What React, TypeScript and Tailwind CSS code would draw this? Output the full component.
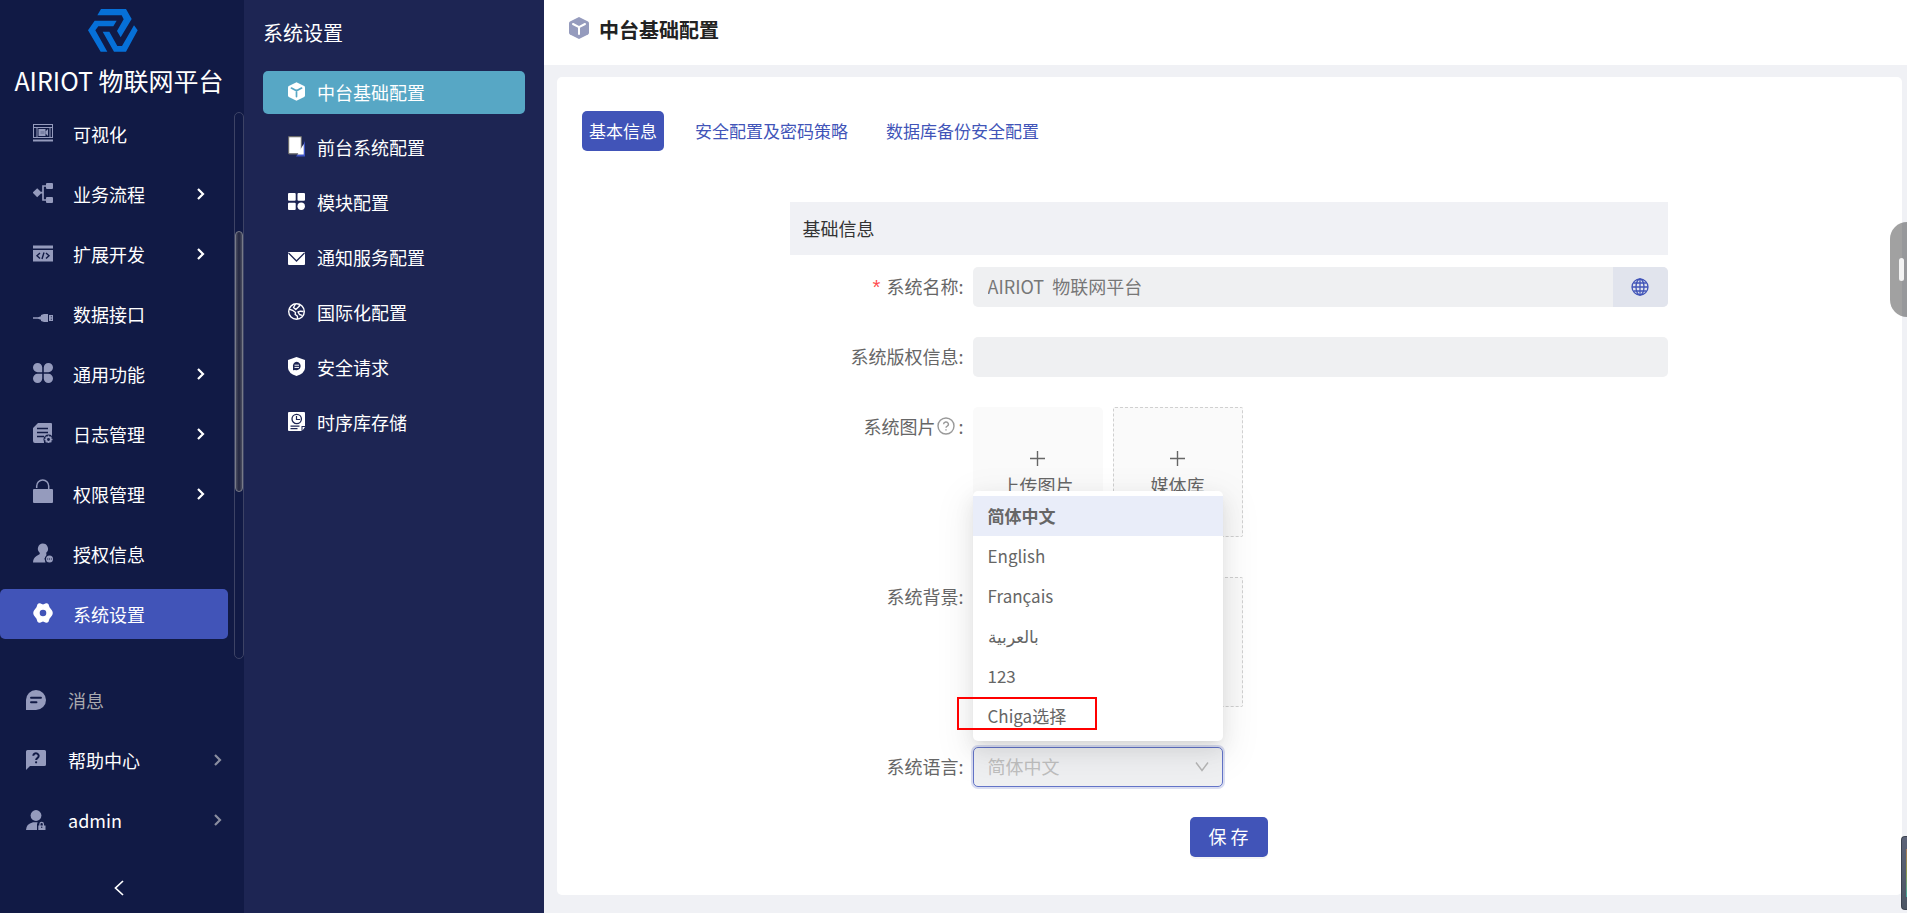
import type { ReactNode } from 'react';
import { AiFillSetting } from 'react-icons/ai';

type IconProps = { children: ReactNode; className?: string; box?: string };

function Glyph({ children, className = 'size-5', box = '0 0 20 20' }: IconProps) {
  return (
    <svg viewBox={box} className={`shrink-0 ${className}`} fill="currentColor" aria-hidden="true">
      {children}
    </svg>
  );
}

const navBg = '#111a45';
const subBg = '#1d2553';

function Chevron({ className }: { className: string }) {
  return (
    <svg viewBox="0 0 8 12" className={`h-3 w-2 shrink-0 ${className}`} fill="none" stroke="currentColor" strokeWidth="2.200" aria-hidden="true">
      <path d="M1 1l5 5-5 5" />
    </svg>
  );
}

function Cube({ className, line }: { className: string; line: string }) {
  return (
    <Glyph className={className} box="0 0 20 22">
      <path d="M10 0l9 4.600q1 .6 1 1.600v9.600q0 1-1 1.600L10 22l-9-4.600q-1-.6-1-1.600V6.200q0-1 1-1.600z" />
      <path d="M4 7l6 3.200L16 7M10 10v7" fill="none" stroke={line} strokeWidth="2" strokeLinecap="round" />
    </Glyph>
  );
}

const icons = {
  visual: (
    <Glyph>
      <path d="M0 1h20v14H0zM1 2v12h18V2z" fillRule="evenodd" />
      <path d="M1 4h18v1H1zM3.500 5h1v9h-1zM16.500 5h1v9h-1zM5.500 6h7v7h-7z" />
      <path d="M12.500 8.500l2.500-2.500v7l-2.500-2.500z" />
      <path d="M7.500 8h4v3h-4z" fill={navBg} opacity=".2" />
      <path d="M0 16.500h20v2H0z" />
    </Glyph>
  ),
  flow: (
    <Glyph>
      <path d="M4.200 5.200l4.600 4.500-4.600 4.500L-.4 9.700z" />
      <rect x="13" y="0" width="7" height="6" rx="1" />
      <rect x="13" y="14" width="7" height="6" rx="1" />
      <path d="M14 3h-4v14h4M8 9.700h2" fill="none" stroke="currentColor" strokeWidth="1.700" />
    </Glyph>
  ),
  code: (
    <Glyph>
      <path d="M0 2.500h20v3H0zM0 7h20v11.500H0z" />
      <path d="M7 10l-3 2.700 3 2.700M13 10l3 2.700-3 2.700M11 9.500l-2 6.500" fill="none" stroke={navBg} strokeWidth="1.400" />
    </Glyph>
  ),
  plug: (
    <Glyph>
      <path d="M0 14.200h5l3-1V12l3-1h4v8h-4l-3-1v-1.200l-3-1H0zM16 12h4v6h-4z" />
      <path d="M17.800 13.300h1v1h-1zM17.800 15.700h1v1h-1z" fill={navBg} />
    </Glyph>
  ),
  clover: (
    <Glyph>
      <path d="M4.600 0a4.600 4.600 0 0 1 4.600 4.600v4.600H4.600a4.600 4.600 0 0 1 0-9.200zM15.400 0a4.600 4.600 0 0 1 0 9.200h-4.600V4.600A4.600 4.600 0 0 1 15.400 0zM4.600 10.800h4.600v4.600a4.600 4.600 0 1 1-4.600-4.600zM10.800 10.800h4.600a4.600 4.600 0 1 1-4.600 4.600z" />
    </Glyph>
  ),
  log: (
    <Glyph>
      <path d="M5 0h13q1 0 1 1v12h-4l-4 4v3H2q-2 0-2-2V5z" />
      <path d="M4 5.500h11M4 9.500h11M4 13.500h7" stroke={navBg} strokeWidth="1.300" />
      <circle cx="15.500" cy="16.500" r="5" fill={navBg} />
      <circle cx="15.500" cy="16.500" r="2.300" fill="none" stroke="currentColor" strokeWidth="1.700" />
      <path d="M15.500 12.500v1.500M15.500 19v1.500M11.500 16.500H13M18 16.500h1.500M12.700 13.700l1 1M17.300 18.300l1 1M12.700 19.300l1-1M17.300 14.700l1-1" stroke="currentColor" strokeWidth="1.300" />
    </Glyph>
  ),
  lock: (
    <Glyph className="mb-1 h-6 w-5" box="0 0 20 24">
      <rect x="0" y="10" width="20" height="14" rx="1" />
      <path d="M3.700 9V7a6 6 0 0 1 12 0v3" fill="none" stroke="currentColor" strokeWidth="1.500" />
    </Glyph>
  ),
  userInfo: (
    <Glyph>
      <path d="M9.700.5a5.300 5.300 0 0 1 3.500 9.300l.3 2.700-2 3 1 4H0q0-4.500 3.500-6.500l3-1.800q.7-.5 0-1.600A5.300 5.300 0 0 1 9.700.5z" />
      <circle cx="16.500" cy="16" r="4.700" fill={navBg} />
      <circle cx="16.500" cy="16" r="3.500" />
      <path d="M14.200 16h1M16 16h1M17.900 16h1" stroke={navBg} strokeWidth="1" />
    </Glyph>
  ),
  gear: (
    <Glyph>
      <path
        d="M10 1.500L13 .2q1.500-.3 2.500 1l1 3 2.500 3.300q1.500 2.500 0 5l-2.500 3.300-1 3q-1 1.300-2.500 1L10 18.500l-3 1.300q-1.500.3-2.500-1l-1-3L1 12.500q-1.500-2.500 0-5l2.500-3.300 1-3q1-1.300 2.500-1zM10 6.700a3.300 3.300 0 1 0 0 6.600 3.300 3.300 0 0 0 0-6.600z"
        fillRule="evenodd"
      />
    </Glyph>
  ),
  message: (
    <Glyph>
      <path d="M10 0a10 10 0 0 1 0 20H0V10A10 10 0 0 1 10 0z" />
      <path d="M5 7.800h10M5 12.300h5.500" stroke={navBg} strokeWidth="1.900" strokeLinecap="round" />
    </Glyph>
  ),
  help: (
    <Glyph>
      <path d="M1.500 0h17Q20 0 20 1.500v13q0 1.500-1.500 1.500H4l-4 4V1.500Q0 0 1.500 0z" />
      <path d="M7.300 5.800a2.700 2.500 0 1 1 4.300 2Q10.100 8.800 10.100 10" fill="none" stroke={navBg} strokeWidth="2" />
      <circle cx="10.100" cy="12.300" r="1.100" fill={navBg} />
    </Glyph>
  ),
  admin: (
    <Glyph>
      <circle cx="10" cy="5.500" r="5.400" />
      <path d="M0 20q0-6 7-7.800h4.500V20z" />
      <path d="M11 20v-6l2-2h5v8z" fill={navBg} />
      <path d="M12.300 20v-4.500h1V14a2.300 2.300 0 0 1 4.700 0v1.500h1.500V20zM14.500 15.500h2.300v-1.300a1.150 1.150 0 0 0-2.300 0z" fillRule="evenodd" />
      <circle cx="15.700" cy="17.300" r=".7" fill={navBg} />
    </Glyph>
  ),
};

const subIcon = 'h-[19px] w-[17px]';

const subIcons = {
  cube: <Cube className={subIcon} line="#57a7c5" />,
  front: (
    <Glyph className="h-[21px] w-[17px]" box="0 0 17 21">
      <path d="M8 20.500h9V5l-2 5z" fill="#3f55c6" />
      <rect x=".6" y=".6" width="12.800" height="17.200" rx=".8" fill="#fff" stroke="#6b6b6b" strokeWidth="1.200" />
      <path d="M15.700 8v10.500H9.500z" fill="#fff" />
    </Glyph>
  ),
  modules: (
    <Glyph className="size-[17px]" box="0 0 17 17">
      <rect width="7.700" height="7.700" rx="1" />
      <rect x="9.500" width="7.500" height="7.700" rx="1" />
      <rect y="9.700" width="7.700" height="7.300" rx="1" />
      <circle cx="13.200" cy="13.300" r="3.700" />
    </Glyph>
  ),
  mail: (
    <Glyph className="size-[17px]" box="0 0 17 17">
      <rect y="4" width="17" height="13" rx="1" />
      <path d="M.5 5l8 8 8-8" fill="none" stroke={subBg} strokeWidth="1.300" />
    </Glyph>
  ),
  globe: (
    <Glyph className="size-[17px]" box="0 0 17 17">
      <circle cx="8.500" cy="8.500" r="7.800" fill="none" stroke="currentColor" strokeWidth="1.400" />
      <path d="M7.500 1L5.500 4.500l2.300 2L11.500 3l-.5-1.500M1 6l3.500 1.300L7.500 9.500l-.3 2 2.100 1.500.3 3M15.500 8.500l-3-.3-2.500.8 1.500 2.500 2.500.8" fill="none" stroke="currentColor" strokeWidth="1.400" strokeLinejoin="round" />
    </Glyph>
  ),
  shield: (
    <Glyph className={subIcon} box="0 0 17 19">
      <path d="M8.500 0L17 3v8q0 5-8.500 8Q0 16 0 11V3z" />
      <path d="M8.700 4.800a4.200 4.200 0 1 1-1.500 8.200L5 13.200V10a4.200 4.200 0 0 1 3.700-5.200z" fill={subBg} />
      <path d="M6.500 8.200h4.500M6.500 10.400h4.500" stroke="currentColor" strokeWidth="1" />
    </Glyph>
  ),
  clock: (
    <Glyph className={subIcon} box="0 0 17 19">
      <path d="M1 0h15q1 0 1 1v13h-3.500v5H1q-1 0-1-1V1q0-1 1-1zM14.500 15H17l-2.500 3.500z" />
      <circle cx="8.700" cy="7" r="4.700" fill="none" stroke={subBg} strokeWidth="1.300" />
      <path d="M8.500 4v3.500H12M2.500 14.200h9M2.500 16.700h7" fill="none" stroke={subBg} strokeWidth="1.200" />
    </Glyph>
  ),
};

const navItems = [
  { label: '可视化', icon: icons.visual, more: false, active: false },
  { label: '业务流程', icon: icons.flow, more: true, active: false },
  { label: '扩展开发', icon: icons.code, more: true, active: false },
  { label: '数据接口', icon: icons.plug, more: false, active: false },
  { label: '通用功能', icon: icons.clover, more: true, active: false },
  { label: '日志管理', icon: icons.log, more: true, active: false },
  { label: '权限管理', icon: icons.lock, more: true, active: false },
  { label: '授权信息', icon: icons.userInfo, more: false, active: false },
  { label: '系统设置', icon: icons.gear, more: false, active: true },
];

const footItems = [
  { label: '消息', icon: icons.message, more: false, muted: true },
  { label: '帮助中心', icon: icons.help, more: true, muted: false },
  { label: 'admin', icon: icons.admin, more: true, muted: false },
];

const subItems = [
  { label: '中台基础配置', icon: subIcons.cube, active: true },
  { label: '前台系统配置', icon: subIcons.front, active: false },
  { label: '模块配置', icon: subIcons.modules, active: false },
  { label: '通知服务配置', icon: subIcons.mail, active: false },
  { label: '国际化配置', icon: subIcons.globe, active: false },
  { label: '安全请求', icon: subIcons.shield, active: false },
  { label: '时序库存储', icon: subIcons.clock, active: false },
];

const tabs = ['基本信息', '安全配置及密码策略', '数据库备份安全配置'];
const languages = ['简体中文', 'English', 'Français', 'بالعربية', '123', 'Chiga选择'];

function Sidebar() {
  return (
    <aside className="flex w-[244px] shrink-0 flex-col bg-[#111a45] text-white">
      <div className="flex h-[109px] flex-col items-center pt-[9px] pr-[6px]">
        <svg viewBox="0 0 150 129" className="mr-3 h-[43px] w-[50px]" fill="#0670d8" aria-hidden="true">
          <path d="M39 0H114L131 30 98 85 87 66 107 31 101 19H28z" />
          <path d="M20 35H86L76 52H31L22 64 58 128H38L0 64z" />
          <path d="M44 68H64L88 111H102L138 49 149 64 114 128H78z" />
        </svg>
        <h1 className="mt-[10px] text-[25px] leading-9 whitespace-nowrap">AIRIOT 物联网平台</h1>
      </div>
      <div className="flex justify-between">
        <nav className="w-[228px]">
          <ul className="flex flex-col gap-[10px]">
            {navItems.map((item) => (
              <li key={item.label}>
                <a
                  href="#"
                  className={`flex h-[50px] items-center rounded-[5px] pr-[23px] pl-[33px] ${item.active ? 'bg-[#4154b8]' : ''}`}
                >
                  <span className={`flex pb-[2px] ${item.active ? 'text-white' : 'text-[#959bbd]'}`}>{item.icon}</span>
                  <span className="ml-5 flex-1 pb-px">{item.label}</span>
                  {item.more && <Chevron className="text-white" />}
                </a>
              </li>
            ))}
          </ul>
        </nav>
        <div className="mt-[3px] -mb-5 w-[10px] rounded-full border border-[#3d4365] pt-[118px]">
          <div className="h-[261px] rounded-full border border-[#777a88] bg-linear-to-r from-[#4a4d60] via-[#22253f] to-[#4a4d60]" />
        </div>
      </div>
      <ul className="mt-9 flex flex-col gap-[10px]">
        {footItems.map((item) => (
          <li key={item.label}>
            <a href="#" className="flex h-[50px] items-center pr-[22px] pl-[26px]">
              <span className="flex text-[#959bbd]">{item.icon}</span>
              <span className={`ml-[22px] flex-1 pb-px ${item.muted ? 'text-[#a9a9ae]' : ''}`}>{item.label}</span>
              {item.more && <Chevron className="text-[#8a8d9f]" />}
            </a>
          </li>
        ))}
      </ul>
      <button type="button" aria-label="收起菜单" className="mt-auto flex h-[50px] items-center justify-center pr-[7px]">
        <svg viewBox="0 0 10 16" className="h-4 w-[10px]" fill="none" stroke="currentColor" strokeWidth="1.700" aria-hidden="true">
          <path d="M9 1L1.500 8 9 15" />
        </svg>
      </button>
    </aside>
  );
}

function SubMenu() {
  return (
    <aside className="w-[300px] shrink-0 bg-[#1d2553] px-[19px] text-white">
      <h2 className="pt-[18px] text-xl leading-[30px]">系统设置</h2>
      <ul className="mt-[23px] flex flex-col gap-3">
        {subItems.map((item) => (
          <li key={item.label}>
            <a
              href="#"
              className={`flex h-[43px] items-center gap-3 rounded-[5px] px-[25px] pb-[2px] ${item.active ? 'bg-[#57a7c5]' : ''}`}
            >
              {item.icon}
              {item.label}
            </a>
          </li>
        ))}
      </ul>
    </aside>
  );
}

function Row({ label, htmlFor, required, hint, children }: { label: string; htmlFor: string; required?: boolean; hint?: boolean; children: ReactNode }) {
  return (
    <div className="flex items-start">
      <label htmlFor={htmlFor} className="flex h-10 w-[183px] shrink-0 items-center justify-end pr-[9px] pb-[2px] text-[#666]">
        {required && <span className="mr-1 pt-2 font-['Liberation_Mono',monospace] text-xl leading-none text-[#ff4d4f]">*</span>}
        {label}
        {hint && (
          <svg viewBox="0 0 18 18" className="mr-[3px] ml-[2px] size-[18px]" fill="none" stroke="#999" strokeWidth="1.400" aria-hidden="true">
            <circle cx="9" cy="9" r="8" />
            <path d="M6.600 7.200a2.400 2.200 0 1 1 3.600 1.900Q9 9.700 9 10.800M9 12.300v1.300" />
          </svg>
        )}
        <span>:</span>
      </label>
      {children}
    </div>
  );
}

function UploadPair({ id, captions = true }: { id: string; captions?: boolean }) {
  return (
    <div className="mb-[10px] flex gap-[10px]">
      {['上传图片', '媒体库'].map((text, i) => (
        <button
          key={text}
          id={i === 0 ? id : undefined}
          type="button"
          aria-label={text}
          className={`flex size-[130px] flex-col items-center justify-center gap-[5px] bg-[#fafafa] text-[#666] ${i === 1 ? 'rounded-[2px] border border-dashed border-[#d0d0d0]' : 'rounded-[5px]'}`}
        >
          <svg viewBox="0 0 15 15" className="mt-[6px] size-[15px]" stroke="currentColor" strokeWidth="1.400" aria-hidden="true">
            <path d="M7.500 0v15M0 7.500h15" />
          </svg>
          {captions && <span className="leading-7">{text}</span>}
        </button>
      ))}
    </div>
  );
}

function SettingsForm() {
  return (
    <form className="mx-auto mt-[51px] w-full max-w-[878px]">
      <h3 className="bg-[#f0f1f5] px-[13px] py-3 leading-[29px] text-[#333]">基础信息</h3>
      <div className="mt-3 flex flex-col gap-[30px]">
        <Row label="系统名称" htmlFor="system-name" required>
          <div className="flex h-10 min-w-0 flex-1 overflow-hidden rounded-[5px] bg-[#eff0f2]">
            <input
              id="system-name"
              readOnly
              value="AIRIOT  物联网平台"
              className="min-w-0 flex-1 bg-transparent px-[15px] pb-[2px] text-[#777] outline-none"
            />
            <button type="button" aria-label="多语言" className="flex w-[55px] items-center justify-center bg-[#e1e4ed]">
              <svg viewBox="0 0 18 18" className="size-[18px]" fill="none" stroke="#4154b8" strokeWidth="1.300" aria-hidden="true">
                <circle cx="9" cy="9" r="8" />
                <ellipse cx="9" cy="9" rx="4" ry="8" />
                <path d="M9 1v16M1 9h16M2.500 5h13M2.500 13h13" />
              </svg>
            </button>
          </div>
        </Row>
        <Row label="系统版权信息" htmlFor="copyright">
          <input id="copyright" className="h-10 min-w-0 flex-1 rounded-[5px] bg-[#eff0f2] px-[15px] text-[#777] outline-none" />
        </Row>
        <Row label="系统图片" htmlFor="system-image" hint>
          <UploadPair id="system-image" />
        </Row>
        <Row label="系统背景" htmlFor="system-background">
          <UploadPair id="system-background" captions={false} />
        </Row>
        <Row label="系统语言" htmlFor="language">
          <div className="relative w-[250px]">
            <select
              id="language"
              defaultValue="简体中文"
              className="block h-10 w-full appearance-none rounded-[5px] border border-[#6374c8] bg-[#eff0f2] px-[14px] pb-[2px] text-[#bfbfbf] shadow-[0_0_0_2px_#d9ddf1] outline-none"
            >
              {languages.map((name) => (
                <option key={name}>{name}</option>
              ))}
            </select>
            <svg viewBox="0 0 14 10" className="pointer-events-none absolute top-[15px] right-[14px] h-[10px] w-[14px]" fill="none" stroke="#b5b5b5" strokeWidth="1.400" aria-hidden="true">
              <path d="M1 .5l6 8 6-8" />
            </svg>
            <ul
              role="listbox"
              aria-label="系统语言"
              className="absolute bottom-[46px] left-0 w-full rounded-[5px] bg-white py-[5px] text-[17px] text-[#666] shadow-[0_4px_8px_-5px_rgba(0,0,0,0.12),0_8px_20px_rgba(0,0,0,0.08),0_11px_35px_10px_rgba(0,0,0,0.05)]"
            >
              {languages.map((name, i) => (
                <li
                  key={name}
                  role="option"
                  aria-selected={i === 0}
                  className={`h-10 px-[15px] leading-10 ${i === 0 ? 'bg-[#e9edf9] font-bold' : ''}`}
                >
                  {name}
                </li>
              ))}
            </ul>
            <div className="pointer-events-none absolute bottom-[57px] -left-4 h-[33px] w-[140px] border-2 border-[#f00]" />
          </div>
        </Row>
      </div>
      <div className="mt-[30px] flex justify-center">
        <button type="submit" className="h-10 w-[78px] rounded-[5px] bg-[#4154b8] pb-[2px] text-white shadow-[0_2px_0_rgba(0,0,0,0.04)]">
          保 存
        </button>
      </div>
    </form>
  );
}

export default function App() {
  return (
    <div className="flex min-h-screen overflow-hidden bg-[#f0f1f5] font-['Noto_Sans_CJK_SC','Noto_Sans',sans-serif] text-lg">
      <Sidebar />
      <SubMenu />
      <div className="flex min-w-0 flex-1 flex-col">
        <header className="flex h-[65px] items-start gap-[10px] bg-white pt-[15px] pl-[25px] text-[#959bbd]">
          <Cube className="mt-[2px] h-[22px] w-5" line="#ffffff" />
          <h2 className="text-xl leading-[30px] font-bold text-[#222]">中台基础配置</h2>
        </header>
        <main className="mt-3 mr-[5px] mb-[18px] ml-[13px] flex-1 rounded-[5px] bg-white pt-[34px] pr-[27px] pl-[25px]">
          <div role="tablist" className="flex gap-6 text-[17px]">
            {tabs.map((tab, i) => (
              <button
                key={tab}
                type="button"
                role="tab"
                aria-selected={i === 0}
                className={`h-10 rounded-[5px] px-[7px] ${i === 0 ? 'bg-[#4154b8] text-white' : 'text-[#4154b8]'}`}
              >
                {tab}
              </button>
            ))}
          </div>
          <SettingsForm />
        </main>
      </div>
      <button type="button" aria-label="展开侧栏" className="fixed top-[222px] right-0 flex h-[95px] w-[17px] items-center justify-end rounded-l-[20px] bg-black/37 pr-[3px]">
        <span className="h-[23px] w-[5px] rounded-full bg-[#f3f3f3]" />
      </button>
      <div className="fixed right-0 bottom-[3px] flex h-[74px] w-[6px] items-center justify-end rounded-l-[4px] border border-r-0 border-[#3c4350] bg-linear-to-b from-[#5c6378] to-[#4c5664]">
        <div className="h-12 w-px bg-linear-to-b from-[#a8785a] via-[#8f9a4e] to-[#3fa9a0]" />
      </div>
    </div>
  );
}
